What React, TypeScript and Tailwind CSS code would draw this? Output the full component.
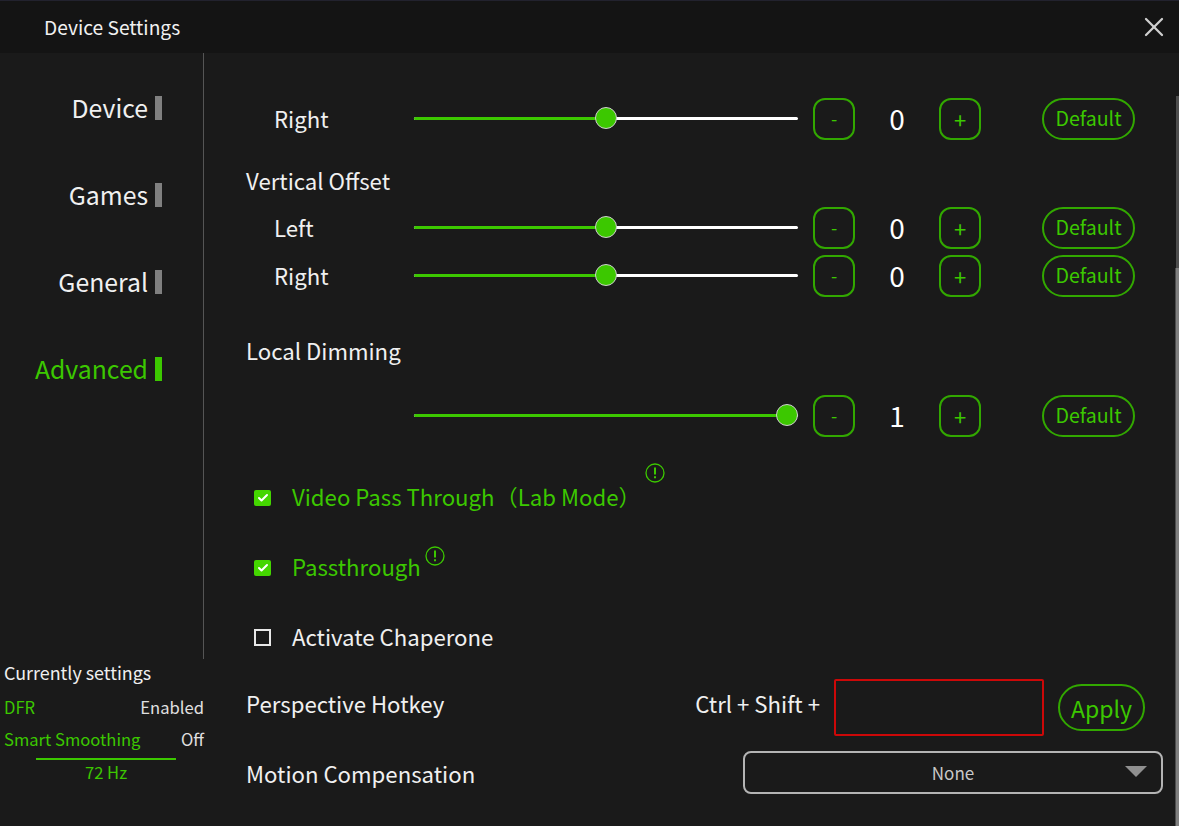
import { Check, X } from 'lucide-react';

const green = 'text-[#3cc800]';

function Slider({ pct }: { pct: number }) {
  return (
    <div className="relative w-[384px] h-[3px] mb-[2px] bg-white rounded-full">
      <div className="h-full bg-[#3cc800] rounded-l-full" style={{ width: `${pct}%` }} />
      <div
        className="absolute top-1/2 w-[22px] h-[22px] -translate-x-1/2 -translate-y-1/2 rounded-full bg-[#3cc800] border border-[#cfcfcf]"
        style={{ left: `${pct}%` }}
      />
    </div>
  );
}

function SliderRow({ label, value, pct, className }: { label?: string; value: string; pct: number; className?: string }) {
  return (
    <div className={`flex items-center h-[42px] ${className ?? ''}`}>
      <div className="w-[200px] shrink-0 pl-[60px] text-[22.2px] text-[#f0f0f0]">{label}</div>
      <Slider pct={pct} />
      <button className={`ml-[15px] w-[42px] h-[42px] pb-[2px] rounded-xl border-2 border-[#32a800] ${green} text-lg`}>-</button>
      <div className="w-[84px] pb-[2px] text-center text-[28px] text-white">{value}</div>
      <button className={`w-[42px] h-[42px] rounded-xl border-2 border-[#32a800] ${green} text-[22px]`}>+</button>
      <button className={`ml-[61px] w-[93px] h-[42px] pb-[2px] rounded-full border-2 border-[#32a800] ${green} text-[19.6px]`}>Default</button>
    </div>
  );
}

function Info({ className }: { className?: string }) {
  return (
    <svg viewBox="0 0 20 20" className={`w-5 h-5 shrink-0 ${className ?? ''}`} fill="none">
      <circle cx="10" cy="10" r="9" stroke="#3cc800" strokeWidth="1.3" />
      <path d="M10 4.6v7M10 13.2v2" stroke="#3cc800" strokeWidth="2" />
    </svg>
  );
}

function CheckRow({ checked, children }: { checked: boolean; children: React.ReactNode }) {
  return (
    <div className="flex items-center h-[32px] pl-[7px]">
      {checked ? (
        <span className="mt-[3px] w-[17px] h-[16px] rounded-[2px] bg-[#44d600] flex items-center justify-center">
          <Check size={12} strokeWidth={4} className="text-white" />
        </span>
      ) : (
        <span className="mt-[3px] w-[17px] h-[17px] border-2 border-[#e8e8e8]" />
      )}
      <div className="ml-[21px] flex items-center text-[22.2px]">{children}</div>
    </div>
  );
}

const navItems = [
  { name: 'Device', active: false },
  { name: 'Games', active: false },
  { name: 'General', active: false },
  { name: 'Advanced', active: true },
];

export default function App() {
  return (
    <div
      className="relative w-[1179px] h-[826px] overflow-hidden flex flex-col bg-[#1a1a1a] text-[#f0f0f0]"
      style={{ fontFamily: '"Noto Sans CJK SC", "Noto Sans", sans-serif' }}
    >
      {/* title bar */}
      <div className="h-[53px] shrink-0 bg-[#141414] flex items-center justify-between pl-[44px] pr-[9px] border-t border-[#22222e]">
        <span className="text-[19.2px] text-[#f0f0f0]">Device Settings</span>
        <X size={32} strokeWidth={1.7} className="text-[#d0d0d0]" />
      </div>

      <div className="flex-1 flex min-h-0">
        {/* sidebar */}
        <div className="w-[204px] shrink-0 flex flex-col">
          <div className="h-[606px] border-r border-[#555555] pt-[43px] pr-[41px] flex flex-col gap-[63px]">
            {navItems.map((item) => (
              <div key={item.name} className="h-[24px] flex items-center justify-end gap-[7px]">
                <span className={`text-[24.8px] ${item.active ? green : 'text-[#f0f0f0]'}`}>{item.name}</span>
                <span className={`w-[7px] h-[24px] ${item.active ? 'bg-[#3cc800]' : 'bg-[#808080]'}`} />
              </div>
            ))}
          </div>
          <div className="pl-[4px] pt-[1px] pr-0">
            <div className="text-[17.9px] leading-[24px]">Currently settings</div>
            <div className="flex justify-between text-[16.6px] leading-[24px] mt-[11px]">
              <span className={green}>DFR</span>
              <span className="text-[#e0e0e0]">Enabled</span>
            </div>
            <div className="flex justify-between text-[16.6px] leading-[24px] mt-[8px]">
              <span className={green}>Smart Smoothing</span>
              <span className="text-[#e0e0e0]">Off</span>
            </div>
            <div className="ml-[32px] w-[140px] h-[2px] bg-[#3cc800] mt-[7px]" />
            <div className={`ml-[32px] w-[140px] text-center text-[16.6px] leading-[24px] ${green}`}>72 Hz</div>
          </div>
        </div>

        {/* content */}
        <div className="flex-1 pl-[10px] pt-[45px] pr-[44px]">
          <SliderRow label="Right" value="0" pct={50} />
          <div className="pl-[32px] mt-[24px] text-[22.2px] leading-[32px]">Vertical Offset</div>
          <SliderRow label="Left" value="0" pct={50} className="mt-[11px]" />
          <SliderRow label="Right" value="0" pct={50} className="mt-[6px]" />
          <div className="pl-[32px] mt-[37px] text-[22.2px] leading-[32px]">Local Dimming</div>
          <SliderRow value="1" pct={97.2} className="mt-[29px]" />
          <div className="mt-[43px] flex flex-col gap-[38px] pl-[33px]">
            <CheckRow checked>
              <span className={`pt-[2px] ${green}`}>Video Pass Through<span className="ml-[1px]">（Lab Mode）</span></span>
              <Info className="-mt-[46px] ml-[4px]" />
            </CheckRow>
            <CheckRow checked>
              <span className={`pt-[2px] ${green}`}>Passthrough</span>
              <Info className="-mt-[20px] ml-[4px]" />
            </CheckRow>
            <CheckRow checked={false}>
              <span className="pt-[2px]">Activate Chaperone</span>
            </CheckRow>
          </div>
          <div className="mt-[20px] h-[70px] pl-[32px] mr-[-10px] flex items-center">
            <span className="text-[22.2px] pb-[6px]">Perspective Hotkey</span>
            <span className="ml-auto text-[22.2px] pb-[6px]">Ctrl + Shift +</span>
            <span className="ml-[14px] w-[210px] h-[57px] border-2 border-[#cc0808] rounded-[2px]" />
            <button className={`ml-[14px] w-[87px] h-[47px] rounded-full border-2 border-[#32a800] ${green} text-[23px] pt-[2px]`}>Apply</button>
          </div>
          <div className="h-[43px] pl-[32px] flex items-center mt-[9px]">
            <span className="text-[22.2px] pt-[2px]">Motion Compensation</span>
            <div className="relative ml-auto mr-[-28px] w-[420px] h-[43px] rounded-lg border-2 border-[#b4b4b4] flex items-center justify-center text-[17px] text-[#c8c8c8]">
              None
              <span className="absolute right-[14px] top-[13px] w-0 h-0 border-l-[11px] border-r-[11px] border-t-[11px] border-l-transparent border-r-transparent border-t-[#909090]" />
            </div>
          </div>
        </div>
      </div>

      {/* scrollbar lies over the content edge */}
      <div className="absolute right-0 top-[96px] bottom-0 w-[3px] bg-[#4e4e4e]" />
      <div className="absolute right-0 top-[268px] bottom-0 w-[3px] bg-[#808080]" />
      <div className="absolute right-[3px] top-[268px] bottom-0 w-[1px] bg-[#4e4e4e]" />
    </div>
  );
}
